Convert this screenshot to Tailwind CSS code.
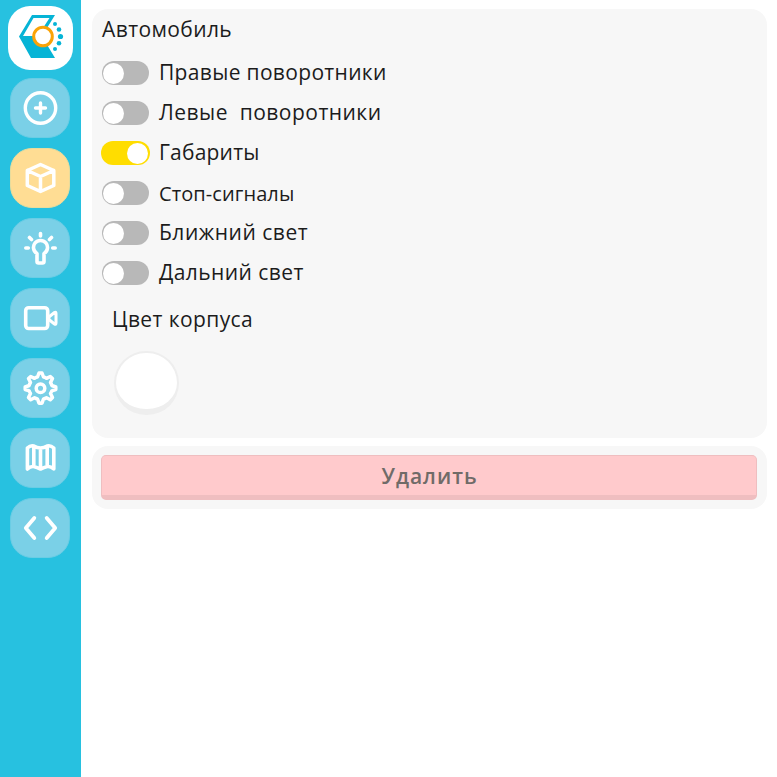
<!DOCTYPE html>
<html lang="ru">
<head>
<meta charset="utf-8">
<title>Автомобиль</title>
<script src="https://cdn.jsdelivr.net/npm/@tailwindcss/browser@4"></script>
</head>
<body class="flex h-[777px] w-[777px] overflow-hidden bg-white font-['Open_Sans','Noto_Sans',sans-serif] text-[21px] font-normal text-[#1c1c1c]">
<nav class="flex h-full w-[81px] shrink-0 flex-col bg-[#27c1e0] pt-[6px]">
  <a class="ml-[8px] mb-[8px] h-[64px] w-[65px] rounded-[22px] bg-white">
    <svg class="h-[64px] w-[65px]" viewBox="8 6 65 64">
      <path d="M55 15H32L19 36.500L31 58H55L46 43L38 36H23L33.500 18H49.500L43 28H47Z" fill="#06b4d6"/>
      <circle cx="43" cy="36.500" r="9.300" fill="#fff" stroke="#faa307" stroke-width="3"/>
      <g fill="#06b4d6"><circle cx="55" cy="24" r="2"/><circle cx="59" cy="29.500" r="2.300"/><circle cx="60.500" cy="36.500" r="2.600"/><circle cx="59" cy="43.300" r="2.300"/><circle cx="55" cy="49" r="2"/></g>
    </svg>
  </a>
  <div class="ml-[10px] flex flex-col gap-[10px]">
    <a class="flex size-[60px] items-center justify-center rounded-[22px] border border-[#6acde5] bg-[#7ad0e7]"><svg class="size-[40px]" viewBox="0 0 40 40" fill="none" stroke="#fff" stroke-width="3.400" stroke-linecap="round"><circle cx="20.500" cy="20" r="15.200"/><path d="M15.500 20h10M20.500 15v10"/></svg></a>
    <a class="flex size-[60px] items-center justify-center rounded-[22px] border border-[#e9dc9c] bg-[#ffdd94]"><svg class="size-[40px]" viewBox="0 0 40 40" fill="none" stroke="#fff" stroke-width="3.500" stroke-linecap="round" stroke-linejoin="round"><path d="M20.500 6.500L33.800 12.500V27.500L20.500 33.500L7.300 27.500V12.500ZM7.300 12.500L20.500 18.500L33.800 12.500M20.500 18.500V33.500"/></svg></a>
    <a class="flex size-[60px] items-center justify-center rounded-[22px] border border-[#6acde5] bg-[#7ad0e7]"><svg class="size-[40px]" viewBox="0 0 40 40" fill="none" stroke="#fff" stroke-width="3.600" stroke-linecap="round" stroke-linejoin="round"><path d="M17 25.500A7 7 0 1 1 24 25.500V33.500Q24 35 22.500 35H18.500Q17 35 17 33.500ZM20.500 5.500V8M9.500 9.500L11.500 11.500M31.500 9.500L29.500 11.500M5.800 20H8.300M32.700 20H35.200"/></svg></a>
    <a class="flex size-[60px] items-center justify-center rounded-[22px] border border-[#6acde5] bg-[#7ad0e7]"><svg class="size-[40px]" viewBox="0 0 40 40" fill="none" stroke="#fff" stroke-width="3.600" stroke-linecap="round" stroke-linejoin="round"><rect x="5.700" y="9.700" width="22" height="20.800" rx="3"/><path stroke-width="3" d="M29.500 18.500L34.500 14.500Q36 13.500 36 15.500V25Q36 27 34.500 26L29.500 22Q28 20.200 29.500 18.500"/></svg></a>
    <a class="flex size-[60px] items-center justify-center rounded-[22px] border border-[#6acde5] bg-[#7ad0e7]"><svg class="size-[40px]" viewBox="0 0 40 40" fill="none" stroke="#fff" stroke-width="3.500" stroke-linejoin="round"><path d="M19 5H22L23.500 9Q25 9.200 26.500 10.300L30.300 8.500L32.500 10.500L30.500 14.500Q31.500 16 31.800 17.500L35.800 19V21.500L31.800 22.800Q31.500 24 30.500 25.500L32.500 29.500L30.300 31.800L26.500 29.800Q25 30.700 23.500 31L22 35.200H19L17.500 31Q16 30.700 14.500 29.800L10.700 31.800L8.500 29.500L10.500 25.500Q9.500 24 9.200 22.800L5.200 21.500V19L9.200 17.500Q9.500 16 10.500 14.500L8.500 10.500L10.700 8.500L14.500 10.300Q16 9.200 17.500 9Z"/><circle cx="20.500" cy="20.200" r="4.300"/></svg></a>
    <a class="flex size-[60px] items-center justify-center rounded-[22px] border border-[#6acde5] bg-[#7ad0e7]"><svg class="size-[40px]" viewBox="0 0 40 40" fill="none" stroke="#fff" stroke-width="3.600" stroke-linecap="round" stroke-linejoin="round"><path d="M7.400 10Q10.500 7 13.800 8Q17 10 20.500 10Q24 10 27.200 8Q30.500 7 33.800 10V31Q30.500 28 27.200 28.500Q24 29.500 20.500 31Q17 29.500 13.800 28.500Q10.500 28 7.400 31ZM13.800 8V28.500M20.500 10V31M27.200 8V28.500"/></svg></a>
    <a class="flex size-[60px] items-center justify-center rounded-[22px] border border-[#6acde5] bg-[#7ad0e7]"><svg class="size-[40px]" viewBox="0 0 40 40" fill="none" stroke="#fff" stroke-width="3.800" stroke-linecap="round" stroke-linejoin="round"><path d="M14.300 10L5.800 20L14.300 30M26.700 10L35.200 20L26.700 30"/></svg></a>
  </div>
</nav>
<main class="flex flex-1 flex-col gap-[8px] pt-[9px] pr-[10px] pl-[11px]">
  <section class="h-[429px] rounded-[16px] bg-[#f7f7f7] pt-[5px] pl-[9px]">
    <h1 class="mb-[14px] h-[30px] pl-[1px] leading-[30px] tracking-[0.4px]">Автомобиль</h1>
    <div class="flex flex-col gap-[10px] whitespace-pre leading-[28px]">
      <div class="flex h-[30px] items-center gap-[10px]"><span class="ml-[1px] flex h-[24px] w-[47px] items-center rounded-full bg-[#b8b8b8] p-[2px] pl-[1px]"><i class="size-[21px] rounded-full bg-white"></i></span><span class="pb-[2px] tracking-[0.33px]">Правые поворотники</span></div>
      <div class="flex h-[30px] items-center gap-[10px]"><span class="ml-[1px] flex h-[24px] w-[47px] items-center rounded-full bg-[#b8b8b8] p-[2px] pl-[1px]"><i class="size-[21px] rounded-full bg-white"></i></span><span class="pb-[2px] tracking-[0.47px]">Левые  поворотники</span></div>
      <div class="flex h-[30px] items-center gap-[9px]"><span class="flex h-[24px] w-[49px] items-center justify-end rounded-full bg-[#ffdd00] p-[2px]"><i class="size-[21px] rounded-full bg-white"></i></span><span class="pb-[2px] tracking-[0.2px]">Габариты</span></div>
      <div class="flex h-[30px] items-center gap-[10px]"><span class="ml-[1px] flex h-[24px] w-[47px] items-center rounded-full bg-[#b8b8b8] p-[2px] pl-[1px]"><i class="size-[21px] rounded-full bg-white"></i></span><span class="pt-[2px] text-[20px] tracking-[0.08px]">Стоп-сигналы</span></div>
      <div class="flex h-[30px] items-center gap-[10px]"><span class="ml-[1px] flex h-[24px] w-[47px] items-center rounded-full bg-[#b8b8b8] p-[2px] pl-[1px]"><i class="size-[21px] rounded-full bg-white"></i></span><span class="pb-[2px] tracking-[0.52px]">Ближний свет</span></div>
      <div class="flex h-[30px] items-center gap-[10px]"><span class="ml-[1px] flex h-[24px] w-[47px] items-center rounded-full bg-[#b8b8b8] p-[2px] pl-[1px]"><i class="size-[21px] rounded-full bg-white"></i></span><span class="pb-[2px] tracking-[0.42px]">Дальний свет</span></div>
    </div>
    <h2 class="mt-[16px] ml-[11px] h-[30px] leading-[30px] tracking-[0.4px]">Цвет корпуса</h2>
    <button class="mt-[17px] ml-[13px] block h-[64px] w-[65px] rounded-full border-x-2 border-t-2 border-b-[6px] border-[#eeeeee] bg-white" aria-label="Цвет корпуса"></button>
  </section>
  <section class="h-[63px] rounded-[16px] bg-[#f7f7f7] pt-[9px] pr-[10px] pl-[9px]">
    <button class="block h-[45px] w-full rounded-[5px] border-x border-t border-b-[5px] border-[#efbec0] bg-[#ffcacc] pl-[1px] leading-[40px] font-semibold tracking-[1px] text-[#706b68]">Удалить</button>
  </section>
</main>
</body>
</html>
